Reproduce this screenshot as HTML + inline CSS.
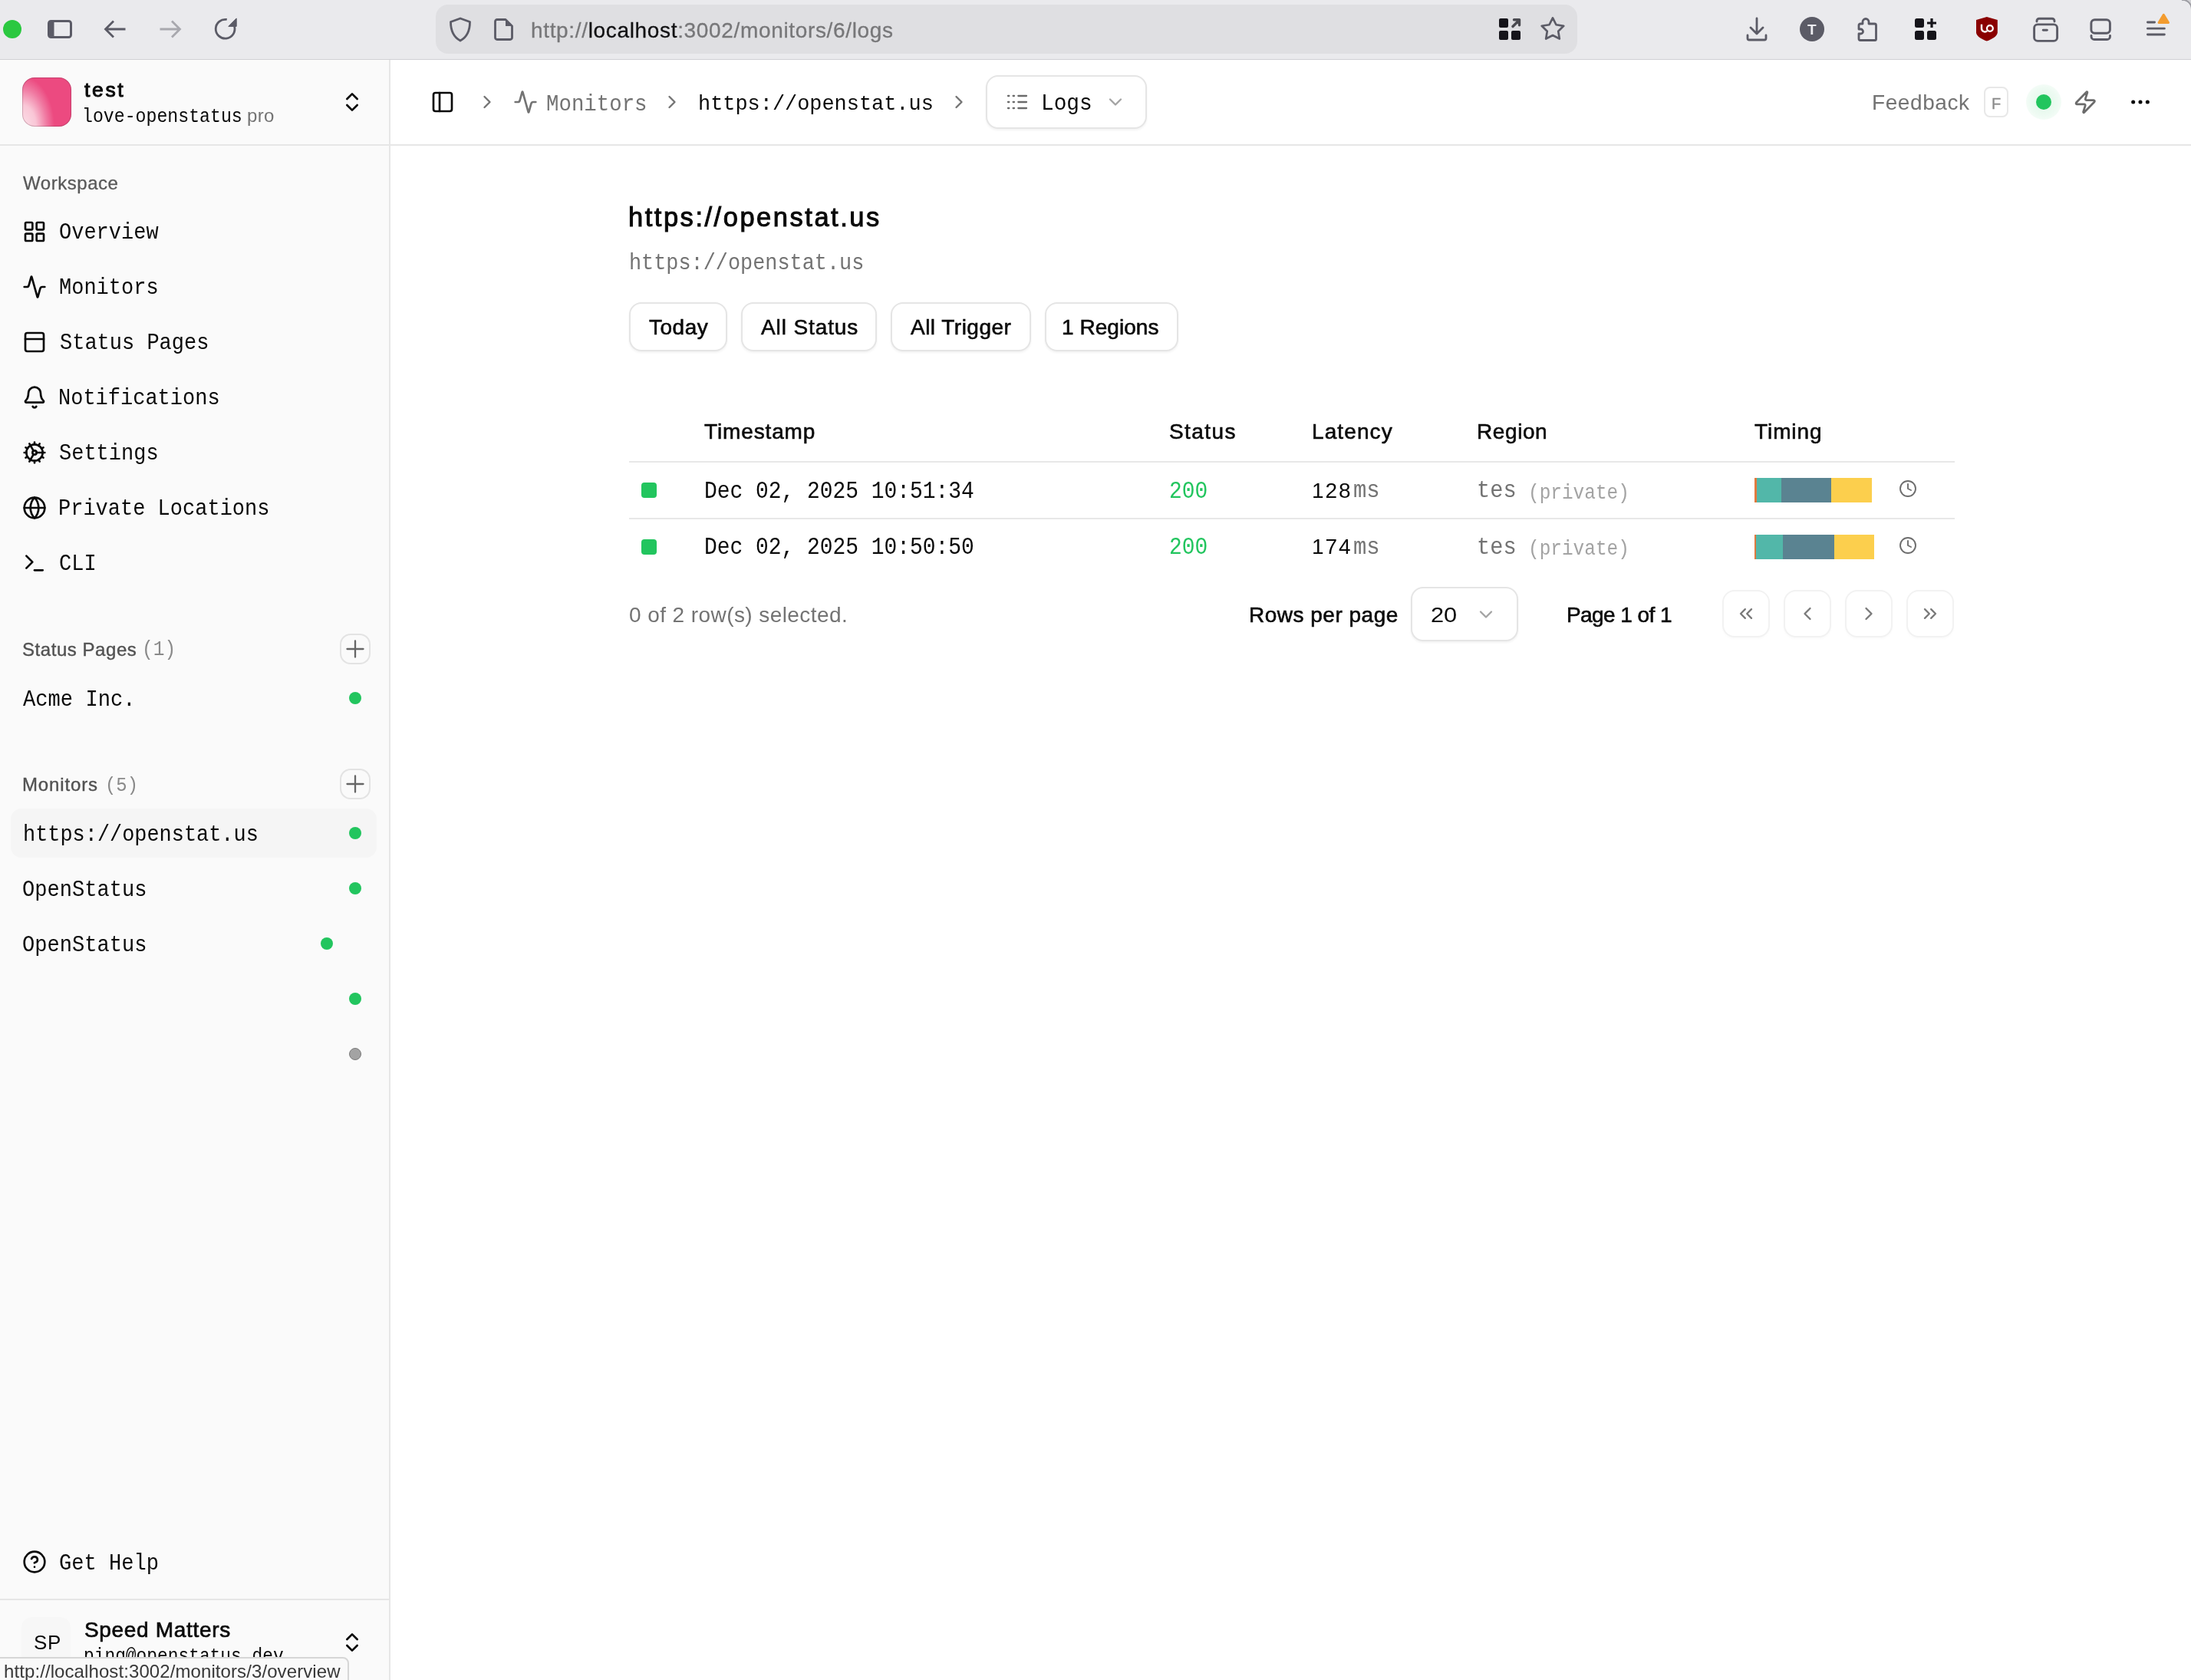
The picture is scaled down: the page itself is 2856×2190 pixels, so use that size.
<!DOCTYPE html>
<html><head><meta charset="utf-8"><title>Logs</title>
<style>
html,body{margin:0;padding:0}
body{width:2856px;height:2190px;overflow:hidden;position:relative;background:#fff;font-family:"Liberation Sans",sans-serif;color:#0a0a0a}
.a{position:absolute}
.t{position:absolute;white-space:nowrap;line-height:1;will-change:transform}
svg.i{position:absolute;fill:none;stroke:currentColor;stroke-linecap:round;stroke-linejoin:round;overflow:visible}
.dot{position:absolute;border-radius:50%;background:#22c55e}
.btn{position:absolute;box-sizing:border-box;border:2px solid #e5e5e5;border-radius:16px;background:#fff;box-shadow:0 2px 3px rgba(0,0,0,0.05)}
</style></head>
<body>

<div class="a" style="left:0;top:0;width:2856px;height:77px;background:#eaeaed;border-bottom:1px solid #d0d0d4"></div>
<div class="a" style="left:2844px;top:0;width:12px;height:12px;background:radial-gradient(circle at 0.8px 11.8px,rgba(0,0,0,0) 10.6px,#9a9aa0 11.4px,#a0a0a6 12.6px,#d2d2d6 13.4px)"></div>
<div class="dot" style="left:4px;top:26px;width:24px;height:24px;background:#2bc840"></div>
<svg class="i" style="left:62px;top:26px;color:#5b5b66" width="32" height="24" viewBox="0 0 32 24"><rect x="1.5" y="1.5" width="29" height="21" rx="3" stroke-width="3"/><rect x="1.5" y="1.5" width="7" height="21" fill="#5b5b66" stroke="none"/></svg>
<svg class="a" style="left:135px;top:25px" width="30" height="26" viewBox="0 0 30 26"><path d="M28.5 13H3M13 2.5 2.5 13 13 23.5" stroke="#5b5b66" fill="none" stroke-width="2.8" stroke-linecap="butt" stroke-linejoin="miter"/></svg>
<svg class="a" style="left:207px;top:25px" width="30" height="26" viewBox="0 0 30 26"><path d="M1.5 13H27M17 2.5 27.5 13 17 23.5" stroke="#a8a8ae" fill="none" stroke-width="2.8" stroke-linecap="butt" stroke-linejoin="miter"/></svg>
<svg class="a" style="left:278px;top:22px" width="32" height="32" viewBox="0 0 32 32"><path d="M27.58 12.49A12.4 12.4 0 1 1 17.75 3.49" stroke="#5b5b66" fill="none" stroke-width="2.8"/><path d="M30.2 1.9V12.4H19.8Z" fill="#5b5b66" stroke="#5b5b66" stroke-width="1" stroke-linejoin="round"/></svg>
<div class="a" style="left:568px;top:6px;width:1488px;height:64px;background:#dfdfe2;border-radius:16px"></div>
<svg class="i" style="left:585px;top:22px;color:#5b5b66" width="30" height="33" viewBox="0 0 30 33"><path d="M15 2 27.5 6.5c0 12-4 20-12.5 24.5C6.5 26.5 2.5 18.5 2.5 6.5Z" stroke-width="2.8"/></svg>
<svg class="i" style="left:644px;top:24px;color:#5b5b66" width="25" height="29" viewBox="0 0 25 29"><path d="M4 1.5h11l8.5 8.5v15a2.5 2.5 0 0 1-2.5 2.5H4A2.5 2.5 0 0 1 1.5 25V4A2.5 2.5 0 0 1 4 1.5Z" stroke-width="2.8"/><path d="M15 1.5v8.5h8.5z" fill="#5b5b66" stroke="none"/></svg>
<div class="t" style="left:692.0px;top:25.6px;font-family:'Liberation Sans',sans-serif;font-size:28.00px;color:#777779;letter-spacing:0.66px;-webkit-text-stroke:0.3px #777779">http://<span style="color:#111113;-webkit-text-stroke:0.3px #111113">localhost</span>:3002/monitors/6/logs</div>
<svg class="a" style="left:1954px;top:24px" width="29" height="28" viewBox="0 0 29 28"><rect x="0" y="0" width="12" height="12" rx="2" fill="#15141a"/><rect x="0" y="16" width="12" height="12" rx="2" fill="#15141a"/><rect x="16" y="16" width="12" height="12" rx="2" fill="#15141a"/><path d="M18 10.5 26.5 2M19.5 1.8h7v7" stroke="#4a4a50" stroke-width="3.4" fill="none" stroke-linecap="round" stroke-linejoin="round"/></svg>
<svg class="a" style="left:2008px;top:22px" width="32" height="32" viewBox="0 0 32 32"><path d="M16.00 1.40 L20.47 10.25 L30.27 11.76 L23.23 18.75 L24.82 28.54 L16.00 24.00 L7.18 28.54 L8.77 18.75 L1.73 11.76 L11.53 10.25Z" stroke="#5b5b66" fill="none" stroke-width="2.7" stroke-linejoin="round"/></svg>
<svg class="i" style="left:2276px;top:22px;color:#5b5b66" width="28" height="32" viewBox="0 0 28 32"><path d="M14 2v20M6 14l8 8 8-8M2 24v4a2 2 0 0 0 2 2h20a2 2 0 0 0 2-2v-4" stroke-width="2.8"/></svg>
<div class="dot" style="left:2346px;top:22px;width:32px;height:32px;background:#5b5b66"></div>
<div class="t" style="left:2356px;top:28.5px;font-size:19px;line-height:19px;font-weight:700;color:#ececf0">T</div>
<svg class="i" style="left:2421px;top:22px;color:#5b5b66" width="28" height="32" viewBox="0 0 28 32"><path d="M11 2.5a4 4 0 0 1 4 4V9h7.5a2 2 0 0 1 2 2v18.5a1 1 0 0 1-1 1H4a2 2 0 0 1-2-2v-6.5h2.5a3 3 0 0 0 0-6H2V11a2 2 0 0 1 2-2h3V6.5a4 4 0 0 1 4-4z" stroke-width="2.8"/></svg>
<svg class="a" style="left:2496px;top:24px" width="29" height="29" viewBox="0 0 29 29"><rect x="0" y="0" width="12" height="12" rx="2.5" fill="#15141a"/><rect x="0" y="16" width="12" height="12" rx="2.5" fill="#15141a"/><rect x="16" y="16" width="12" height="12" rx="2.5" fill="#15141a"/><path d="M22 0v12M16 6h12" stroke="#15141a" stroke-width="3.2"/></svg>
<svg class="a" style="left:2576px;top:22px" width="28" height="32" viewBox="0 0 28 32"><path d="M13.8 0 27.8 4.1V20.2C27.8 25 20 29.5 13.8 31.5 7.6 29.5 0 25 0 20.2V4.1Z" fill="#8a0000"/><path d="M7 9.8V15a4.4 4.4 0 0 0 7.2 3.4" stroke="#fff" stroke-width="2.4" fill="none"/><circle cx="17.9" cy="15" r="3.9" stroke="#fff" stroke-width="2.3" fill="none"/></svg>
<svg class="a" style="left:2648px;top:20px" width="36" height="36" viewBox="0 0 36 36" fill="none" stroke="#5b5b66" stroke-width="2.9" stroke-linecap="round"><rect x="3.6" y="11.9" width="30" height="21.5" rx="4.5"/><path d="M7 8V7.2a3 3 0 0 1 3-3h17a3 3 0 0 1 3 3V8"/><path d="M15.3 19.3h5"/></svg>
<svg class="a" style="left:2722px;top:20px" width="32" height="34" viewBox="0 0 32 34" fill="none" stroke="#5b5b66" stroke-width="2.9" stroke-linecap="round"><rect x="3.9" y="5.7" width="24.5" height="17.5" rx="4.5"/><path d="M4 26.5v1a4 4 0 0 0 4 4h16.5a4 4 0 0 0 4-4v-1"/></svg>
<svg class="a" style="left:2794px;top:14px" width="40" height="36" viewBox="0 0 40 36" fill="none" stroke="#5b5b66" stroke-width="2.8" stroke-linecap="round"><path d="M5.4 15h9.2M5.4 23.2h22M5.4 31h22"/><path d="M26.3 5.3 32.5 15.5H20.1Z" fill="#f39c2f" stroke="#f39c2f" stroke-width="3" stroke-linejoin="round"/></svg>
<div class="a" style="left:0;top:78px;width:507px;height:2112px;background:#fafafa;border-right:2px solid #e6e6e6"></div>
<div class="a" style="left:0;top:188px;width:2856px;height:2px;background:#e6e6e6"></div>
<div class="a" style="left:29px;top:101px;width:64px;height:64px;border-radius:16px;background:radial-gradient(ellipse 80% 125% at 0% 100%,#fbe0e8 0%,#f9c6d6 35%,#f07aa2 62%,#ec4a80 82%);box-shadow:inset 0 0 0 1px rgba(90,30,50,0.25)"></div>
<div class="t" style="left:110.3px;top:104.4px;font-family:'Liberation Sans',sans-serif;font-size:26.50px;color:#0a0a0a;letter-spacing:2.65px;-webkit-text-stroke:1.0px #0a0a0a">test</div>
<div class="t" style="left:107.4px;top:141.7px;font-family:'Liberation Mono',monospace;font-size:23.20px;color:#0a0a0a;transform:scale(1.0000,1.1);transform-origin:0 17.78px">love-openstatus</div>
<div class="t" style="left:322.0px;top:139.0px;font-family:'Liberation Sans',sans-serif;font-size:24.00px;color:#737373;letter-spacing:0.33px">pro</div>
<svg class="i" style="left:443px;top:117px;color:#0a0a0a" width="32" height="32" viewBox="0 0 24 24" stroke-width="2"><path d="m7 15 5 5 5-5"/><path d="m7 9 5-5 5 5"/></svg>
<div class="t" style="left:30.4px;top:226.5px;font-family:'Liberation Sans',sans-serif;font-size:24.00px;color:#595959;letter-spacing:0.54px;-webkit-text-stroke:0.3px #595959">Workspace</div>
<svg class="i" style="left:29px;top:285.6px;color:#0a0a0a" width="32" height="32" viewBox="0 0 24 24" stroke-width="2"><rect x="3" y="3" width="7" height="7" rx="1"/><rect x="14" y="3" width="7" height="7" rx="1"/><rect x="14" y="14" width="7" height="7" rx="1"/><rect x="3" y="14" width="7" height="7" rx="1"/></svg>
<div class="t" style="left:76.7px;top:290.9px;font-family:'Liberation Mono',monospace;font-size:27.00px;color:#0a0a0a;transform:scale(1.0000,1.1);transform-origin:0 20.70px">Overview</div>
<svg class="i" style="left:29px;top:357.6px;color:#0a0a0a" width="32" height="32" viewBox="0 0 24 24" stroke-width="2"><path d="M22 12h-2.48a2 2 0 0 0-1.93 1.46l-2.35 8.36a.25.25 0 0 1-.48 0L9.24 2.18a.25.25 0 0 0-.48 0l-2.35 8.36A2 2 0 0 1 4.49 12H2"/></svg>
<div class="t" style="left:76.7px;top:362.9px;font-family:'Liberation Mono',monospace;font-size:27.00px;color:#0a0a0a;transform:scale(1.0000,1.1);transform-origin:0 20.70px">Monitors</div>
<svg class="i" style="left:29px;top:429.7px;color:#0a0a0a" width="32" height="32" viewBox="0 0 24 24" stroke-width="2"><rect width="18" height="18" x="3" y="3" rx="2"/><path d="M3 9h18"/></svg>
<div class="t" style="left:77.6px;top:435.0px;font-family:'Liberation Mono',monospace;font-size:27.00px;color:#0a0a0a;transform:scale(1.0000,1.1);transform-origin:0 20.70px">Status Pages</div>
<svg class="i" style="left:29px;top:501.8px;color:#0a0a0a" width="32" height="32" viewBox="0 0 24 24" stroke-width="2"><path d="M10.268 21a2 2 0 0 0 3.464 0"/><path d="M3.262 15.326A1 1 0 0 0 4 17h16a1 1 0 0 0 .74-1.673C19.41 13.956 18 12.499 18 8A6 6 0 0 0 6 8c0 4.499-1.411 5.956-2.738 7.326"/></svg>
<div class="t" style="left:75.7px;top:507.1px;font-family:'Liberation Mono',monospace;font-size:27.00px;color:#0a0a0a;transform:scale(1.0000,1.1);transform-origin:0 20.70px">Notifications</div>
<svg class="i" style="left:29px;top:573.7px;color:#0a0a0a" width="32" height="32" viewBox="0 0 24 24" stroke-width="2"><path d="M12 20a8 8 0 1 0 0-16 8 8 0 0 0 0 16Z"/><path d="M12 14a2 2 0 1 0 0-4 2 2 0 0 0 0 4Z"/><path d="M12 2v2"/><path d="M12 22v-2"/><path d="m17 20.66-1-1.73"/><path d="M11 10.27 7 3.34"/><path d="m20.66 17-1.73-1"/><path d="m3.34 7 1.73 1"/><path d="M14 12h8"/><path d="M2 12h2"/><path d="m20.66 7-1.73 1"/><path d="m3.34 17 1.73-1"/><path d="m17 3.34-1 1.73"/><path d="m11 13.73-4 6.93"/></svg>
<div class="t" style="left:76.7px;top:579.0px;font-family:'Liberation Mono',monospace;font-size:27.00px;color:#0a0a0a;transform:scale(1.0000,1.1);transform-origin:0 20.70px">Settings</div>
<svg class="i" style="left:29px;top:645.8px;color:#0a0a0a" width="32" height="32" viewBox="0 0 24 24" stroke-width="2"><circle cx="12" cy="12" r="10"/><path d="M12 2a14.5 14.5 0 0 0 0 20 14.5 14.5 0 0 0 0-20"/><path d="M2 12h20"/></svg>
<div class="t" style="left:75.7px;top:651.1px;font-family:'Liberation Mono',monospace;font-size:27.00px;color:#0a0a0a;transform:scale(1.0000,1.1);transform-origin:0 20.70px">Private Locations</div>
<svg class="i" style="left:29px;top:717.8px;color:#0a0a0a" width="32" height="32" viewBox="0 0 24 24" stroke-width="2"><polyline points="4 17 10 11 4 5"/><line x1="12" x2="20" y1="19" y2="19"/></svg>
<div class="t" style="left:76.7px;top:723.1px;font-family:'Liberation Mono',monospace;font-size:27.00px;color:#0a0a0a;transform:scale(1.0000,1.1);transform-origin:0 20.70px">CLI</div>
<div class="t" style="left:28.7px;top:834.9px;font-family:'Liberation Sans',sans-serif;font-size:24.00px;color:#525252;letter-spacing:0.55px;-webkit-text-stroke:0.4px #525252">Status Pages</div>
<div class="t" style="left:185.4px;top:836.4px;font-family:'Liberation Mono',monospace;font-size:24.53px;color:#8a8a8a;transform:scale(1.0000,1.1);transform-origin:0 18.80px">(1)</div>
<div class="a" style="left:443px;top:826px;width:40px;height:40px;box-sizing:border-box;border:2px solid #e3e3e3;border-radius:14px;background:#fafafa"></div>
<svg class="i" style="left:451px;top:834px;color:#666666" width="24" height="24" viewBox="0 0 24 24" stroke-width="2.3"><path d="M1.5 12h21M12 1.5v21"/></svg>
<div class="t" style="left:29.7px;top:899.0px;font-family:'Liberation Mono',monospace;font-size:27.13px;color:#0a0a0a;transform:scale(1.0000,1.1);transform-origin:0 20.80px">Acme Inc.</div>
<div class="dot" style="left:454.7px;top:902.0px;width:16px;height:16px;background:#22c55e;"></div>
<div class="t" style="left:28.7px;top:1010.7px;font-family:'Liberation Sans',sans-serif;font-size:24.00px;color:#525252;letter-spacing:0.85px;-webkit-text-stroke:0.4px #525252">Monitors</div>
<div class="t" style="left:136.7px;top:1012.7px;font-family:'Liberation Mono',monospace;font-size:23.86px;color:#8a8a8a;transform:scale(1.0000,1.1);transform-origin:0 18.29px">(5)</div>
<div class="a" style="left:443px;top:1002px;width:40px;height:40px;box-sizing:border-box;border:2px solid #e3e3e3;border-radius:14px;background:#fafafa"></div>
<svg class="i" style="left:451px;top:1010px;color:#666666" width="24" height="24" viewBox="0 0 24 24" stroke-width="2.3"><path d="M1.5 12h21M12 1.5v21"/></svg>
<div class="a" style="left:14px;top:1054px;width:477px;height:64px;border-radius:14px;background:#f5f5f5"></div>
<div class="t" style="left:29.5px;top:1075.7px;font-family:'Liberation Mono',monospace;font-size:26.92px;color:#0a0a0a;transform:scale(1.0000,1.1);transform-origin:0 20.64px">https://openstat.us</div>
<div class="dot" style="left:454.7px;top:1078.3px;width:16px;height:16px;background:#22c55e;"></div>
<div class="t" style="left:28.7px;top:1147.0px;font-family:'Liberation Mono',monospace;font-size:27.08px;color:#0a0a0a;transform:scale(1.0000,1.1);transform-origin:0 20.76px">OpenStatus</div>
<div class="dot" style="left:454.7px;top:1150.0px;width:16px;height:16px;background:#22c55e;"></div>
<div class="t" style="left:28.7px;top:1219.2px;font-family:'Liberation Mono',monospace;font-size:27.08px;color:#0a0a0a;transform:scale(1.0000,1.1);transform-origin:0 20.76px">OpenStatus</div>
<div class="dot" style="left:417.8px;top:1222.0px;width:16px;height:16px;background:#22c55e;"></div>
<div class="dot" style="left:454.7px;top:1294.0px;width:16px;height:16px;background:#22c55e;"></div>
<div class="dot" style="left:454.7px;top:1366.0px;width:16px;height:16px;background:#a3a3a3;box-sizing:border-box;border:1.5px solid #7a7a7a"></div>
<svg class="i" style="left:29px;top:2020px;color:#0a0a0a" width="32" height="32" viewBox="0 0 24 24" stroke-width="2"><circle cx="12" cy="12" r="10"/><path d="M9.09 9a3 3 0 0 1 5.83 1c0 2-3 3-3 3"/><path d="M12 17h.01"/></svg>
<div class="t" style="left:76.6px;top:2025.1px;font-family:'Liberation Mono',monospace;font-size:27.08px;color:#0a0a0a;transform:scale(1.0000,1.1);transform-origin:0 20.76px">Get Help</div>
<div class="a" style="left:0;top:2084px;width:507px;height:2px;background:#e6e6e6"></div>
<div class="a" style="left:28px;top:2108px;width:64px;height:64px;border-radius:14px;background:#f7f7f7"></div>
<div class="t" style="left:43.5px;top:2127.7px;font-family:'Liberation Sans',sans-serif;font-size:26.00px;color:#0a0a0a;letter-spacing:0.76px">SP</div>
<div class="t" style="left:109.7px;top:2110.5px;font-family:'Liberation Sans',sans-serif;font-size:28.00px;color:#0a0a0a;letter-spacing:0.68px;-webkit-text-stroke:0.7px #0a0a0a">Speed Matters</div>
<div class="t" style="left:108.7px;top:2148.5px;font-family:'Liberation Mono',monospace;font-size:22.87px;color:#0a0a0a;transform:scale(1.0000,1.1);transform-origin:0 17.53px">ping@openstatus.dev</div>
<svg class="i" style="left:443px;top:2125px;color:#0a0a0a" width="32" height="32" viewBox="0 0 24 24" stroke-width="2"><path d="m7 15 5 5 5-5"/><path d="m7 9 5-5 5 5"/></svg>
<div class="a" style="left:-2px;top:2160px;width:457px;height:40px;box-sizing:border-box;background:#f9f9f9;border:2px solid #d6d6d6;border-radius:0 8px 0 0"></div>
<div class="t" style="left:4.7px;top:2167.0px;font-family:'Liberation Sans',sans-serif;font-size:24.00px;color:#383838;letter-spacing:0.09px">http://localhost:3002/monitors/3/overview</div>
<svg class="i" style="left:561px;top:117px;color:#0a0a0a" width="32" height="32" viewBox="0 0 24 24" stroke-width="2"><rect width="18" height="18" x="3" y="3" rx="2"/><path d="M9 3v18"/></svg>
<svg class="i" style="left:621px;top:119px;color:#737373" width="28" height="28" viewBox="0 0 24 24" stroke-width="2"><path d="m9 18 6-6-6-6"/></svg>
<svg class="i" style="left:669px;top:117px;color:#737373" width="32" height="32" viewBox="0 0 24 24" stroke-width="2"><path d="M22 12h-2.48a2 2 0 0 0-1.93 1.46l-2.35 8.36a.25.25 0 0 1-.48 0L9.24 2.18a.25.25 0 0 0-.48 0l-2.35 8.36A2 2 0 0 1 4.49 12H2"/></svg>
<div class="t" style="left:711.5px;top:122.6px;font-family:'Liberation Mono',monospace;font-size:27.42px;color:#737373;transform:scale(1.0000,1.05);transform-origin:0 21.02px">Monitors</div>
<svg class="i" style="left:862px;top:119px;color:#737373" width="28" height="28" viewBox="0 0 24 24" stroke-width="2"><path d="m9 18 6-6-6-6"/></svg>
<div class="t" style="left:909.5px;top:122.6px;font-family:'Liberation Mono',monospace;font-size:26.92px;color:#0a0a0a;transform:scale(1.0000,1.05);transform-origin:0 20.64px">https://openstat.us</div>
<svg class="i" style="left:1236px;top:119px;color:#737373" width="28" height="28" viewBox="0 0 24 24" stroke-width="2"><path d="m9 18 6-6-6-6"/></svg>
<div class="btn" style="left:1285px;top:98px;width:210px;height:70px"></div>
<svg class="i" style="left:1310px;top:117px;color:#6b6b6b" width="32" height="32" viewBox="0 0 24 24" stroke-width="1.7"><path d="M13 12h8"/><path d="M13 18h8"/><path d="M13 6h8"/><path d="M3 12h1"/><path d="M3 18h1"/><path d="M3 6h1"/><path d="M8 12h1"/><path d="M8 18h1"/><path d="M8 6h1"/></svg>
<div class="t" style="left:1356.6px;top:121.9px;font-family:'Liberation Mono',monospace;font-size:27.81px;color:#0a0a0a;transform:scale(1.0000,1.05);transform-origin:0 21.32px">Logs</div>
<svg class="i" style="left:1440px;top:119px;color:#a3a3a3" width="28" height="28" viewBox="0 0 24 24" stroke-width="2"><path d="m6 9 6 6 6-6"/></svg>
<div class="t" style="left:2439.6px;top:119.5px;font-family:'Liberation Sans',sans-serif;font-size:28.00px;color:#737373;letter-spacing:0.58px">Feedback</div>
<div class="a" style="left:2586px;top:113px;width:32px;height:40px;box-sizing:border-box;border:2px solid #e8e8e8;border-radius:8px;background:#fff"></div>
<div class="t" style="left:2596.0px;top:124.6px;font-family:'Liberation Sans',sans-serif;font-size:20.00px;color:#8a8a8a;-webkit-text-stroke:0.3px #8a8a8a">F</div>
<div class="dot" style="left:2641px;top:110px;width:46px;height:46px;background:radial-gradient(circle,rgba(34,197,94,0.14) 0%,rgba(34,197,94,0.08) 55%,rgba(34,197,94,0) 100%)"></div>
<div class="dot" style="left:2654px;top:123px;width:20px;height:20px"></div>
<svg class="i" style="left:2702px;top:116.5px;color:#6b6b6b" width="32.5" height="32.5" viewBox="0 0 24 24" stroke-width="2"><path d="M4 14a1 1 0 0 1-.78-1.63l9.9-10.2a.5.5 0 0 1 .86.46l-1.92 6.02A1 1 0 0 0 13 10h7a1 1 0 0 1 .78 1.63l-9.9 10.2a.5.5 0 0 1-.86-.46l1.92-6.02A1 1 0 0 0 11 14z"/></svg>
<svg class="a" style="left:2774px;top:117px" width="32" height="32" viewBox="0 0 24 24" fill="#0a0a0a"><circle cx="5" cy="12" r="1.9"/><circle cx="12" cy="12" r="1.9"/><circle cx="19" cy="12" r="1.9"/></svg>
<div class="t" style="left:819.0px;top:265.6px;font-family:'Liberation Sans',sans-serif;font-size:34.50px;color:#0a0a0a;letter-spacing:2.52px;-webkit-text-stroke:1.0px #0a0a0a">https://openstat.us</div>
<div class="t" style="left:819.9px;top:330.8px;font-family:'Liberation Mono',monospace;font-size:26.86px;color:#737373;transform:scale(1.0000,1.1);transform-origin:0 20.59px">https://openstat.us</div>
<div class="btn" style="left:820px;top:394px;width:128px;height:64px"></div>
<div class="t" style="left:845.5px;top:412.6px;font-family:'Liberation Sans',sans-serif;font-size:28.00px;color:#0a0a0a;letter-spacing:0.50px;-webkit-text-stroke:0.6px #0a0a0a">Today</div>
<div class="btn" style="left:966px;top:394px;width:177px;height:64px"></div>
<div class="t" style="left:991.5px;top:412.6px;font-family:'Liberation Sans',sans-serif;font-size:28.00px;color:#0a0a0a;letter-spacing:0.89px;-webkit-text-stroke:0.6px #0a0a0a">All Status</div>
<div class="btn" style="left:1161px;top:394px;width:183px;height:64px"></div>
<div class="t" style="left:1187.2px;top:412.6px;font-family:'Liberation Sans',sans-serif;font-size:28.00px;color:#0a0a0a;letter-spacing:0.48px;-webkit-text-stroke:0.6px #0a0a0a">All Trigger</div>
<div class="btn" style="left:1362px;top:394px;width:174px;height:64px"></div>
<div class="t" style="left:1384.3px;top:412.6px;font-family:'Liberation Sans',sans-serif;font-size:28.00px;color:#0a0a0a;letter-spacing:0.05px;-webkit-text-stroke:0.6px #0a0a0a">1 Regions</div>
<div class="t" style="left:918.2px;top:548.8px;font-family:'Liberation Sans',sans-serif;font-size:28.00px;color:#0a0a0a;letter-spacing:0.87px;-webkit-text-stroke:0.6px #0a0a0a">Timestamp</div>
<div class="t" style="left:1523.6px;top:548.8px;font-family:'Liberation Sans',sans-serif;font-size:28.00px;color:#0a0a0a;letter-spacing:1.40px;-webkit-text-stroke:0.6px #0a0a0a">Status</div>
<div class="t" style="left:1709.8px;top:548.8px;font-family:'Liberation Sans',sans-serif;font-size:28.00px;color:#0a0a0a;letter-spacing:1.11px;-webkit-text-stroke:0.6px #0a0a0a">Latency</div>
<div class="t" style="left:1925.4px;top:548.8px;font-family:'Liberation Sans',sans-serif;font-size:28.00px;color:#0a0a0a;letter-spacing:0.59px;-webkit-text-stroke:0.6px #0a0a0a">Region</div>
<div class="t" style="left:2286.7px;top:548.8px;font-family:'Liberation Sans',sans-serif;font-size:28.00px;color:#0a0a0a;letter-spacing:0.92px;-webkit-text-stroke:0.6px #0a0a0a">Timing</div>
<div class="a" style="left:820px;top:601px;width:1728px;height:2px;background:#e8e8e8"></div>
<div class="a" style="left:820px;top:675px;width:1728px;height:2px;background:#e8e8e8"></div>
<div class="a" style="left:836px;top:629.3px;width:20px;height:20px;border-radius:4px;background:#22c55e"></div>
<div class="t" style="left:917.7px;top:627.9px;font-family:'Liberation Mono',monospace;font-size:27.92px;color:#0a0a0a;transform:scale(1.0000,1.1);transform-origin:0 21.40px">Dec 02, 2025 10:51:34</div>
<div class="t" style="left:1523.6px;top:627.9px;font-family:'Liberation Mono',monospace;font-size:27.88px;color:#22c55e;transform:scale(1.0000,1.1);transform-origin:0 21.37px">200</div>
<div class="t" style="left:1709.8px;top:625.6px;font-family:'Liberation Sans',sans-serif;font-size:28.00px;color:#0a0a0a;letter-spacing:1.88px">128</div>
<div class="t" style="left:1764.0px;top:627.2px;font-family:'Liberation Mono',monospace;font-size:28.82px;color:#737373;transform:scale(1.0000,1.1);transform-origin:0 22.09px">ms</div>
<div class="t" style="left:1925.0px;top:627.3px;font-family:'Liberation Mono',monospace;font-size:28.66px;color:#737373;transform:scale(1.0000,1.1);transform-origin:0 21.97px">tes</div>
<div class="t" style="left:1992.4px;top:631.6px;font-family:'Liberation Mono',monospace;font-size:24.43px;color:#a3a3a3;transform:scale(1.0000,1.1);transform-origin:0 18.72px">(private)</div>
<div class="a" style="left:2287px;top:623px;width:3.4px;height:32px;background:#e07a3f"></div>
<div class="a" style="left:2290.4px;top:623px;width:31.3px;height:32px;background:#52b7a9"></div>
<div class="a" style="left:2321.7px;top:623px;width:65.3px;height:32px;background:#5a8391"></div>
<div class="a" style="left:2387px;top:623px;width:53.0px;height:32px;background:#fccf4d"></div>
<svg class="i" style="left:2475px;top:625px;color:#6e6e6e" width="24" height="24" viewBox="0 0 24 24" stroke-width="1.9"><circle cx="12" cy="12" r="10"/><polyline points="12 6 12 12 16 14"/></svg>
<div class="a" style="left:836px;top:702.6px;width:20px;height:20px;border-radius:4px;background:#22c55e"></div>
<div class="t" style="left:917.7px;top:701.2px;font-family:'Liberation Mono',monospace;font-size:27.92px;color:#0a0a0a;transform:scale(1.0000,1.1);transform-origin:0 21.40px">Dec 02, 2025 10:50:50</div>
<div class="t" style="left:1523.6px;top:701.2px;font-family:'Liberation Mono',monospace;font-size:27.88px;color:#22c55e;transform:scale(1.0000,1.1);transform-origin:0 21.37px">200</div>
<div class="t" style="left:1709.8px;top:698.9px;font-family:'Liberation Sans',sans-serif;font-size:28.00px;color:#0a0a0a;letter-spacing:1.88px">174</div>
<div class="t" style="left:1764.0px;top:700.5px;font-family:'Liberation Mono',monospace;font-size:28.82px;color:#737373;transform:scale(1.0000,1.1);transform-origin:0 22.09px">ms</div>
<div class="t" style="left:1925.0px;top:700.6px;font-family:'Liberation Mono',monospace;font-size:28.66px;color:#737373;transform:scale(1.0000,1.1);transform-origin:0 21.97px">tes</div>
<div class="t" style="left:1992.4px;top:704.9px;font-family:'Liberation Mono',monospace;font-size:24.43px;color:#a3a3a3;transform:scale(1.0000,1.1);transform-origin:0 18.72px">(private)</div>
<div class="a" style="left:2287px;top:697px;width:2.0px;height:32px;background:#e07a3f"></div>
<div class="a" style="left:2289px;top:697px;width:35.0px;height:32px;background:#52b7a9"></div>
<div class="a" style="left:2324px;top:697px;width:67.0px;height:32px;background:#5a8391"></div>
<div class="a" style="left:2391px;top:697px;width:52.0px;height:32px;background:#fccf4d"></div>
<svg class="i" style="left:2475px;top:699.3px;color:#6e6e6e" width="24" height="24" viewBox="0 0 24 24" stroke-width="1.9"><circle cx="12" cy="12" r="10"/><polyline points="12 6 12 12 16 14"/></svg>
<div class="t" style="left:819.5px;top:787.5px;font-family:'Liberation Sans',sans-serif;font-size:28.00px;color:#737373;letter-spacing:0.42px">0 of 2 row(s) selected.</div>
<div class="t" style="left:1627.7px;top:787.5px;font-family:'Liberation Sans',sans-serif;font-size:28.00px;color:#0a0a0a;letter-spacing:0.50px;-webkit-text-stroke:0.6px #0a0a0a">Rows per page</div>
<div class="btn" style="left:1839px;top:765px;width:140px;height:71px"></div>
<div class="t" style="left:1865.4px;top:787.5px;font-family:'Liberation Sans',sans-serif;font-size:28.00px;color:#0a0a0a;transform:scale(1.0990,1.0);transform-origin:0 23.70px">20</div>
<svg class="i" style="left:1923px;top:787px;color:#a3a3a3" width="28" height="28" viewBox="0 0 24 24" stroke-width="2"><path d="m6 9 6 6 6-6"/></svg>
<div class="t" style="left:2042.0px;top:787.5px;font-family:'Liberation Sans',sans-serif;font-size:28.00px;color:#0a0a0a;letter-spacing:-0.57px;-webkit-text-stroke:0.6px #0a0a0a">Page 1 of 1</div>
<div class="btn" style="left:2245px;top:769px;width:62px;height:62px;border-color:#f2f2f2;box-shadow:0 2px 3px rgba(0,0,0,0.02)"></div>
<svg class="i" style="left:2262px;top:786px;color:#7a7a7a" width="28" height="28" viewBox="0 0 24 24" stroke-width="2"><path d="m11 17-5-5 5-5"/><path d="m18 17-5-5 5-5"/></svg>
<div class="btn" style="left:2325px;top:769px;width:62px;height:62px;border-color:#f2f2f2;box-shadow:0 2px 3px rgba(0,0,0,0.02)"></div>
<svg class="i" style="left:2342px;top:786px;color:#7a7a7a" width="28" height="28" viewBox="0 0 24 24" stroke-width="2"><path d="m15 18-6-6 6-6"/></svg>
<div class="btn" style="left:2405px;top:769px;width:62px;height:62px;border-color:#f2f2f2;box-shadow:0 2px 3px rgba(0,0,0,0.02)"></div>
<svg class="i" style="left:2422px;top:786px;color:#7a7a7a" width="28" height="28" viewBox="0 0 24 24" stroke-width="2"><path d="m9 18 6-6-6-6"/></svg>
<div class="btn" style="left:2485px;top:769px;width:62px;height:62px;border-color:#f2f2f2;box-shadow:0 2px 3px rgba(0,0,0,0.02)"></div>
<svg class="i" style="left:2502px;top:786px;color:#7a7a7a" width="28" height="28" viewBox="0 0 24 24" stroke-width="2"><path d="m6 17 5-5-5-5"/><path d="m13 17 5-5-5-5"/></svg>

</body></html>
